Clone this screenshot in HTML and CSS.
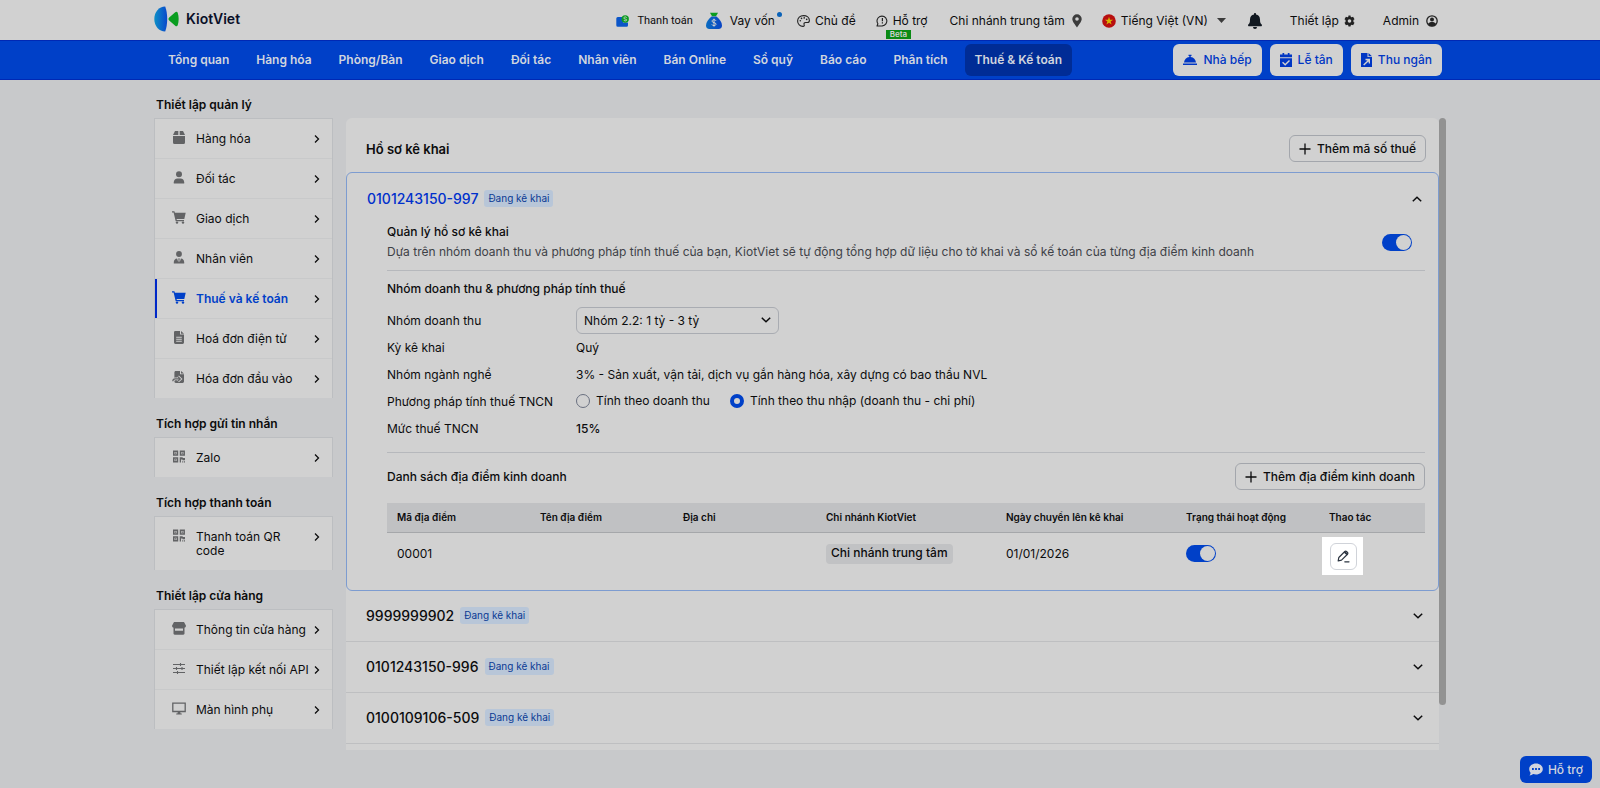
FILE: index.html
```html
<!DOCTYPE html>
<html lang="vi">
<head>
<meta charset="utf-8">
<meta name="viewport" content="width=device-width, initial-scale=1">
<title>KiotViet</title>
<link rel="stylesheet" href="styles.css">
</head>
<body>
<svg class="sprite" aria-hidden="true">
  <defs>
    <linearGradient id="logo-blue" x1="0" x2="1"><stop offset="0" stop-color="#0c8fc6"/><stop offset="1" stop-color="#0a48cc"/></linearGradient>
    <linearGradient id="bag-blue" x1="0" x2="1"><stop offset="0" stop-color="#0a6cc0"/><stop offset="1" stop-color="#0a44c4"/></linearGradient>
  </defs>
  <symbol id="chev" viewBox="0 0 6 10"><path d="M1 1.500 4.500 5 1 8.500" fill="none" stroke="currentColor" stroke-width="1.300"/></symbol>
  <symbol id="down" viewBox="0 0 10 6"><path d="M.8.8 5 4.800 9.200.8" fill="none" stroke="currentColor" stroke-width="1.500"/></symbol>
  <symbol id="plus" viewBox="0 0 12 12"><path d="M6 .5v11M.5 6h11" fill="none" stroke="currentColor" stroke-width="1.300"/></symbol>
  <symbol id="cart" viewBox="0 0 14 13"><path d="M0 .3h2.400l.5 1.500h10.800L12.300 8H4.600l.2 1h7.200v1.300H3.700L1.600 1.600H0z" fill="currentColor"/><circle cx="5" cy="11.600" r="1.200" fill="currentColor"/><circle cx="11" cy="11.600" r="1.200" fill="currentColor"/></symbol>
  <symbol id="qr" viewBox="0 0 12 12"><path fill="none" stroke="currentColor" stroke-width="1.500" d="M.75.75h3.700v3.700H.75zM7.500.75h3.700v3.700H7.500zM.75 7.500h3.700v3.700H.75z"/><path fill="currentColor" d="M1.900 1.900h1.400v1.400H1.900zM8.700 1.900h1.400v1.400H8.700zM1.900 8.700h1.400v1.400H1.900zM6.700 6.700h2.600l.8.900h1.900v2.200H9.500v-.9H8v3H6.700zM9.200 10.700h1v1.200h-1zM10.900 10.700h1.100v1.200h-1.100z"/></symbol>
</svg>

<header class="topbar">
  <div class="wrap topbar-in">
    <a class="logo" href="#">
      <svg width="26" height="26" viewBox="0 0 26 26"><path d="M11.200.5C5 .5.3 6 .3 13s4.700 12.500 10.900 12.500c1.400-3.800 2-8 2-12.500s-.6-8.700-2-12.500z" fill="url(#logo-blue)"/><path d="M15.200 11.500l6-5.300c1-.8 2-.7 2.500.5 1.300 3.600 1.300 8.900 0 12.500-.5 1.200-1.500 1.300-2.500.5l-6-5.300c-1-.9-1-2 0-2.900z" fill="#0a9d20"/></svg>
      <span>KiotViet</span>
    </a>
    <nav class="tools" aria-label="Tiện ích">
      <a class="tool small" href="#"><svg width="13" height="12" viewBox="0 0 13 12"><path d="M1.800 2H7v5.500h5v2.700A1.500 1.500 0 0 1 10.500 11.700H1.800A1.500 1.500 0 0 1 .3 10.200V3.500A1.500 1.500 0 0 1 1.800 2z" fill="#0a55c8"/><circle cx="9.200" cy="4" r="3.700" fill="#0a9d20"/><path d="M10.600 2.700a1.300 1.300 0 0 0-1.300-.8c-1 0-1.400.6-1.400 1.200 0 1.500 2.800.5 2.800 1.800 0 .7-.6 1-1.400 1s-1.300-.4-1.500-.9" fill="none" stroke="#d1d1d1" stroke-width=".9"/></svg>Thanh toán</a>
      <a class="tool g12" href="#"><svg width="18" height="18" viewBox="0 0 18 18"><path d="M5 .8h8l-2 3.400H7z" fill="#0a9d20"/><path d="M6.500 4.600h5c3 2.300 5.500 5.700 5.500 9 0 2.400-1.200 3.400-3.500 3.400h-9C2.200 17 1 16 1 13.600c0-3.300 2.500-6.700 5.500-9z" fill="url(#bag-blue)"/><path d="M11 8.800c-.4-.8-1-1.100-2-1.100-1.200 0-1.900.6-1.900 1.500 0 2 3.900.9 3.900 2.900 0 1-.8 1.500-2 1.500-1.100 0-1.800-.4-2.100-1.200M9 6.700v7.900" fill="none" stroke="#d1d1d1"/></svg><span class="dotted">Vay vốn</span></a>
      <a class="tool g22 tight" href="#"><svg width="13" height="12" viewBox="0 0 13 12"><path d="M6.500.6C3 .6.600 3 .6 6c0 3.200 2.500 5.400 5.300 5.400 1.500 0 1.600-1 1.200-1.900-.4-1.100.1-2 1.400-2h2c1.200 0 1.900-.8 1.900-2C12.400 2.600 9.800.6 6.500.6z" fill="none" stroke="#222" stroke-width="1.100"/><g fill="#222"><circle cx="3.300" cy="5.800" r=".8"/><circle cx="4.500" cy="3.400" r=".8"/><circle cx="7.200" cy="2.900" r=".8"/><circle cx="9.700" cy="4.400" r=".8"/></g></svg>Chủ đề</a>
      <a class="tool g20 tight beta" href="#"><svg width="12" height="12" viewBox="0 0 12 12"><path d="M1 11l.9-2.200A4.900 4.900 0 1 1 6.300 10.900z" fill="none" stroke="#222" stroke-width="1.100" stroke-linejoin="round"/><path d="M6.400 3v3.300M6.400 7.200v1.200" stroke="#222" stroke-width="1.200"/></svg>Hỗ trợ<b>Beta</b></a>
      <a class="tool g22" href="#">Chi nhánh trung tâm<svg width="10" height="14" viewBox="0 0 10 14"><path d="M5 .3A4.700 4.700 0 0 0 .3 5c0 2.500 3 6 4.700 8.500C6.700 11 9.700 7.500 9.700 5A4.700 4.700 0 0 0 5 .3zm0 6.500a1.800 1.800 0 1 1 0-3.600 1.800 1.800 0 0 1 0 3.600z" fill="#3c3c3c"/></svg></a>
      <a class="tool g20 tight" href="#"><svg width="14" height="14" viewBox="0 0 14 14"><circle cx="7" cy="7" r="6.800" fill="#b80f0f"/><path d="M7 2.800l1 3h3.100L8.600 7.600l1 3L7 8.800l-2.600 1.800 1-3-2.500-1.800H6z" fill="#d8b400"/></svg>Tiếng Việt (VN)<svg class="caret" width="9" height="5" viewBox="0 0 9 5"><path d="M0 0h9L4.500 5z" fill="#3c3c3c"/></svg></a>
      <a class="tool g22" href="#" aria-label="Thông báo"><svg width="14" height="16" viewBox="0 0 14 16"><path d="M7 0c.6 0 1 .4 1 1v.6c2.400.4 4 2.300 4 4.800 0 3 .5 3.900 1.700 5.100.6.700.2 1.700-.7 1.700H1c-.9 0-1.300-1-.7-1.700C1.500 10.300 2 9.400 2 6.400c0-2.500 1.600-4.400 4-4.800V1c0-.6.400-1 1-1zM5 14h4a2 2 0 0 1-4 0z" fill="#111820"/></svg></a>
      <a class="tool g28 tight" href="#">Thiết lập<svg width="11" height="12" viewBox="0 0 12 12"><path fill="#222" fill-rule="evenodd" d="M4.900 0h2.200l.3 1.500 1 .5 1.500-.6L11.500 4.100 10.300 5v2l1.200.9L9.900 10.600 8.400 10l-1 .5L7.100 12H4.900l-.3-1.500-1-.5-1.500.6L.5 7.900 1.700 7V5L.5 4.100 2.100 1.400l1.500.6 1-.5zM6 4a2 2 0 1 0 0 4 2 2 0 0 0 0-4z"/></svg></a>
      <a class="tool g28" href="#">Admin<svg width="12" height="12" viewBox="0 0 12 12"><circle cx="6" cy="6" r="5.200" fill="none" stroke="#222" stroke-width="1.300"/><circle cx="6" cy="4.600" r="2" fill="#222"/><path d="M2 9c.9-1.500 2.200-1.900 4-1.900s3.100.4 4 1.900c-1 1.600-2.300 2.200-4 2.200S3 10.600 2 9z" fill="#222"/></svg></a>
    </nav>
  </div>
</header>

<div class="navbar">
  <div class="wrap navbar-in">
    <nav class="menu" aria-label="Chính">
      <a href="#">Tổng quan</a><a href="#">Hàng hóa</a><a href="#">Phòng/Bàn</a><a href="#">Giao dịch</a><a href="#">Đối tác</a><a href="#">Nhân viên</a><a href="#">Bán Online</a><a href="#">Sổ quỹ</a><a href="#">Báo cáo</a><a href="#">Phân tích</a><a class="on" href="#">Thuế &amp; Kế toán</a>
    </nav>
    <div class="quick">
      <button type="button"><svg width="14" height="12" viewBox="0 0 14 12"><path d="M0 9.400h14v1.500H0zM1 8.600C1.300 5.500 3.400 3.400 6.300 3V2H5.500V.8h3V2h-.8v1c2.900.4 5 2.500 5.300 5.600z" fill="currentColor"/></svg>Nhà bếp</button>
      <button type="button"><svg width="12" height="14" viewBox="0 0 12 14"><path fill="currentColor" fill-rule="evenodd" d="M2.500 0h1.700v1.600h3.600V0h1.700v1.600H12v2.600H0V1.600h2.500zM0 5.200h12V14H0zm3 3.600L2.100 9.800 5.200 12.800 10 8 9 7 5.200 10.800z"/></svg>Lễ tân</button>
      <button type="button"><svg width="11" height="14" viewBox="0 0 11 14"><path fill="currentColor" fill-rule="evenodd" d="M0 0h6.500v4H11v10H0zM7.500 0L11 3.200H7.500zM4.500 5.800v1.500l2 .2L2.200 11.600l1 1L7.500 8.400l.3 2.200H9V5.800z"/></svg>Thu ngân</button>
    </div>
  </div>
</div>

<div class="wrap page">
  <aside class="side">
    <h2>Thiết lập quản lý</h2>
    <ul>
      <li><a href="#"><svg class="ic" viewBox="0 0 14 13"><path d="M3 0h3.300v4H1zM7.700 0H11l2 4H7.700zM1 5h12v6.500a1.500 1.500 0 0 1-1.500 1.500h-9A1.500 1.500 0 0 1 1 11.500z" fill="currentColor"/></svg><span>Hàng hóa</span><svg class="go"><use href="#chev"/></svg></a></li>
      <li><a href="#"><svg class="ic" viewBox="0 0 14 13"><circle cx="7" cy="3.200" r="3" fill="currentColor"/><path d="M1.800 12.500v-1.300C1.800 8.800 3.400 7.400 5.500 7.400h3c2.100 0 3.700 1.400 3.700 3.800v1.300z" fill="currentColor"/></svg><span>Đối tác</span><svg class="go"><use href="#chev"/></svg></a></li>
      <li><a href="#"><svg class="ic"><use href="#cart"/></svg><span>Giao dịch</span><svg class="go"><use href="#chev"/></svg></a></li>
      <li><a href="#"><svg class="ic" viewBox="0 0 14 13"><circle cx="7" cy="3" r="2.900" fill="currentColor"/><path d="M1.800 12.500v-1.300c0-2.200 1.300-3.600 3.300-3.800l1.200 3.900.3-2.400-.5-1.300h1.800l-.5 1.300.3 2.400 1.200-3.900c2 .2 3.300 1.600 3.300 3.800v1.300z" fill="currentColor"/></svg><span>Nhân viên</span><svg class="go"><use href="#chev"/></svg></a></li>
      <li class="on"><a href="#"><svg class="ic"><use href="#cart"/></svg><span>Thuế và kế toán</span><svg class="go"><use href="#chev"/></svg></a></li>
      <li><a href="#"><svg class="ic" viewBox="0 0 14 13"><path fill="currentColor" fill-rule="evenodd" d="M3.200 0H8v3.600h4v8a1.400 1.400 0 0 1-1.400 1.400H3.400A1.400 1.400 0 0 1 2 11.600V1.400C2 .6 2.500 0 3.200 0zM9 0l3 2.700H9zM4.200 5.800v.9h5.600v-.9zm0 2v.9h5.600v-.9zm0 2v.9h5.600v-.9z"/></svg><span>Hoá đơn điện tử</span><svg class="go"><use href="#chev"/></svg></a></li>
      <li><a href="#"><svg class="ic" viewBox="0 0 14 13"><path fill="currentColor" d="M3.800 0H8v3.300h4v7.300a1.400 1.400 0 0 1-1.400 1.400H3.800a1.400 1.400 0 0 1-1.400-1.400V1.400C2.400.6 3 0 3.800 0zM9 0l3 2.500H9z"/><path d="M.8 10.300c0-1.700 1-2.400 2.500-2.400h4M6 5.500l2.600 2.400L6 10.300" fill="none" stroke="#d1d1d1" stroke-width="2.600"/><path d="M.8 10.300c0-1.700 1-2.400 2.500-2.400h4.600M6 5.700l2.300 2.200L6 10.100" fill="none" stroke="currentColor" stroke-width="1.200"/></svg><span>Hóa đơn đầu vào</span><svg class="go"><use href="#chev"/></svg></a></li>
    </ul>
    <h2>Tích hợp gửi tin nhắn</h2>
    <ul>
      <li><a href="#"><svg class="ic qr"><use href="#qr"/></svg><span>Zalo</span><svg class="go"><use href="#chev"/></svg></a></li>
    </ul>
    <h2>Tích hợp thanh toán</h2>
    <ul>
      <li><a href="#"><svg class="ic qr"><use href="#qr"/></svg><span>Thanh toán QR code</span><svg class="go"><use href="#chev"/></svg></a></li>
    </ul>
    <h2>Thiết lập cửa hàng</h2>
    <ul>
      <li><a href="#"><svg class="ic" viewBox="0 0 14 13"><path fill="currentColor" fill-rule="evenodd" d="M2 0h10l2 3.800C14 5 13 5.800 12.500 5.800v5.700c0 .7-.5 1.200-1.200 1.200H2.700c-.7 0-1.200-.5-1.200-1.200V5.800C1 5.800 0 5 0 3.800zM3 6.500v2.300h8V6.500z"/></svg><span>Thông tin cửa hàng</span><svg class="go"><use href="#chev"/></svg></a></li>
      <li><a href="#"><svg class="ic" viewBox="0 0 14 13"><path d="M1 2.500h12M1 6.500h12M1 10.500h12M8.500 1v3M4.500 5v3M10 5v3M5.500 9v3" stroke="currentColor" stroke-width="1.100"/></svg><span>Thiết lập kết nối API</span><svg class="go"><use href="#chev"/></svg></a></li>
      <li><a href="#"><svg class="ic" viewBox="0 0 14 13"><path fill="none" stroke="currentColor" stroke-width="1.300" d="M.8 1.200h12.400v8.300H.8z"/><path fill="currentColor" d="M5.800 10h2.400l.4 1.400h1.200v1H4.200v-1h1.200z"/></svg><span>Màn hình phụ</span><svg class="go"><use href="#chev"/></svg></a></li>
    </ul>
  </aside>

  <main class="panel">
    <div class="panel-body">
      <div class="panel-head">
        <h1>Hồ sơ kê khai</h1>
        <button type="button" class="btn"><svg width="12" height="12"><use href="#plus"/></svg>Thêm mã số thuế</button>
      </div>

      <section class="open">
        <header class="row-head">
          <h2>0101243150-997</h2><span class="tag">Đang kê khai</span>
          <button type="button" class="toggle up" aria-label="Thu gọn"><svg width="10" height="6"><use href="#down"/></svg></button>
        </header>
        <div class="detail">
          <div class="manage">
            <div>
              <h3><label for="manage">Quản lý hồ sơ kê khai</label></h3>
              <p>Dựa trên nhóm doanh thu và phương pháp tính thuế của bạn, KiotViet sẽ tự động tổng hợp dữ liệu cho tờ khai và sổ kế toán của từng địa điểm kinh doanh</p>
            </div>
            <input id="manage" class="switch" type="checkbox" checked>
          </div>
          <div class="method">
            <h3>Nhóm doanh thu &amp; phương pháp tính thuế</h3>
            <div class="fields">
              <label for="group">Nhóm doanh thu</label>
              <div class="select"><select id="group"><option>Nhóm 2.2: 1 tỷ - 3 tỷ</option></select><svg width="10" height="6"><use href="#down"/></svg></div>
              <span>Kỳ kê khai</span><span>Quý</span>
              <span>Nhóm ngành nghề</span><span>3% - Sản xuất, vận tải, dịch vụ gắn hàng hóa, xây dựng có bao thầu NVL</span>
              <span>Phương pháp tính thuế TNCN</span>
              <div class="radios">
                <label><input type="radio" name="method">Tính theo doanh thu</label>
                <label><input type="radio" name="method" checked>Tính theo thu nhập (doanh thu - chi phí)</label>
              </div>
              <span>Mức thuế TNCN</span><span class="strong">15%</span>
            </div>
          </div>
          <div class="places-head">
            <h3>Danh sách địa điểm kinh doanh</h3>
            <button type="button" class="btn"><svg width="12" height="12"><use href="#plus"/></svg>Thêm địa điểm kinh doanh</button>
          </div>
          <table>
            <colgroup><col class="c-std"><col class="c-std"><col class="c-std"><col class="c-wide"><col class="c-wide"><col class="c-std"><col></colgroup>
            <thead><tr><th>Mã địa điểm</th><th>Tên địa điểm</th><th>Địa chỉ</th><th>Chi nhánh KiotViet</th><th>Ngày chuyển lên kê khai</th><th>Trạng thái hoạt động</th><th>Thao tác</th></tr></thead>
            <tbody><tr><td>00001</td><td></td><td></td><td><span class="chip">Chi nhánh trung tâm</span></td><td>01/01/2026</td><td><input class="switch" type="checkbox" checked aria-label="Trạng thái hoạt động"></td>
            <td class="act"><span class="spot"><button type="button" aria-label="Sửa"><svg width="13" height="13" viewBox="0 0 13 13"><path d="M1.200 10.800l.6-3.300 6-6a1.200 1.200 0 0 1 1.700 0l1 1a1.200 1.200 0 0 1 0 1.700l-6 6zM7.800 11.800h4.200" fill="none" stroke="#2b3440" stroke-width="1.200" stroke-linejoin="round" stroke-linecap="round"/><path d="M6.800 2.500l1.400-1.300 2.600 2.500-1.400 1.400z" fill="#2b3440"/></svg></button></span></td></tr></tbody>
          </table>
        </div>
      </section>

      <section class="row-head closed"><h2>9999999902</h2><span class="tag">Đang kê khai</span><button type="button" class="toggle" aria-label="Mở rộng"><svg width="10" height="6"><use href="#down"/></svg></button></section>
      <section class="row-head closed"><h2>0101243150-996</h2><span class="tag">Đang kê khai</span><button type="button" class="toggle" aria-label="Mở rộng"><svg width="10" height="6"><use href="#down"/></svg></button></section>
      <section class="row-head closed"><h2>0100109106-509</h2><span class="tag">Đang kê khai</span><button type="button" class="toggle" aria-label="Mở rộng"><svg width="10" height="6"><use href="#down"/></svg></button></section>
    </div>
    <div class="track"><div class="thumb"></div></div>
  </main>
</div>

<button type="button" class="help"><svg width="14" height="13" viewBox="0 0 14 13"><path fill="currentColor" fill-rule="evenodd" d="M7 .5c3.800 0 6.800 2.400 6.800 5.500S10.800 11.500 7 11.500c-1 0-2-.2-2.900-.5-.9.800-2.200 1.300-3.600 1.400.7-.8 1-1.700 1.100-2.700C.7 8.700.2 7.400.2 6 .2 2.900 3.200.5 7 .5zM3 5v2h1.800V5zm3.100 0v2h1.800V5zm3.100 0v2H11V5z"/></svg>Hỗ trợ</button>
</body>
</html>
```
FILE: styles.css
```css
* { box-sizing: border-box; }
body { margin: 0; min-height: 100vh; background: #c8c9cb; color: #0c0c0d; font: 12px/16px Inter, "Liberation Sans", sans-serif; }
a { color: inherit; text-decoration: none; }
button, select { font: inherit; color: inherit; cursor: pointer; }
h1, h2, h3, p, ul { margin: 0; padding: 0; }
svg { flex: none; display: block; }
.sprite { position: absolute; width: 0; height: 0; }
.wrap { max-width: 1292px; margin: 0 auto; }

.topbar { background: #d1d1d1; }
.topbar-in { display: flex; align-items: center; justify-content: space-between; height: 40px; padding-right: 8px; }
.logo { display: flex; align-items: center; gap: 6px; padding-bottom: 3px; font-size: 14px; font-weight: 600; color: #0a0f28; }
.tools { display: flex; align-items: center; height: 40px; padding-top: 1px; }
.tool { display: flex; align-items: center; gap: 7px; white-space: nowrap; }
.tight { gap: 5px; }
.small { font: 11px/16px Roboto, sans-serif; gap: 9px; }
.g12 { margin-left: 12px; }
.g20 { margin-left: 20px; }
.g22 { margin-left: 22px; }
.g28 { margin-left: 28px; }
.caret { margin-left: 4px; }
.dotted, .beta { position: relative; }
.dotted::after { content: ""; position: absolute; right: -7px; top: -1px; width: 5px; height: 5px; border-radius: 50%; background: #0a62b8; }
.beta b { position: absolute; left: 10px; top: 17px; padding: 0 4px; background: #0a8a14; color: #d1d1d1; font-size: 8px; line-height: 9px; font-weight: 600; }

.navbar { background: #0040c8; border: solid #0028b4; border-width: 1px 0; }
.navbar-in { display: flex; align-items: center; justify-content: space-between; height: 38px; padding: 0 4px; }
.menu { display: flex; gap: 7px; color: #d1d5de; font-weight: 600; }
.menu a { padding: 8px 10px; border-radius: 6px; white-space: nowrap; }
.menu .on { background: #002c96; }
.quick { display: flex; gap: 8px; }
.quick button { display: flex; align-items: center; gap: 6px; height: 32px; padding: 0 10px; border: 0; border-radius: 6px; background: #d1d1d1; color: #0036c4; font-weight: 500; white-space: nowrap; }

.page { display: flex; gap: 13px; padding-top: 17px; }
.side { width: 179px; flex: none; }
.side h2 { padding: 0 2px; font-size: 12px; line-height: 16px; font-weight: 600; margin: 18px 0 5px; }
.side h2:first-child { margin-top: 0; }
.side ul { list-style: none; background: #d1d1d1; border: solid #bcbec1; border-width: 1px 1px 0; }
.side li + li { border-top: 1px solid #c8c9ca; }
.side li a { display: flex; gap: 10px; padding: 13px 12px 12px 17px; line-height: 14px; }
.side li span { flex: 1; margin-right: -6px; }
.ic { width: 14px; height: 13px; margin-top: -1px; color: #626365; }
.qr { padding: 0 1px; }
.go { width: 6px; height: 10px; margin-top: 2px; }
.side .on a { border-left: 2px solid #0028c8; padding-left: 15px; color: #0040c8; font-weight: 600; }
.side .on .ic { color: #0040c8; }
.side .on .go { color: #0c0c0d; }

.panel { flex: 1; min-width: 0; margin-top: 21px; display: flex; align-items: stretch; }
.panel-body { flex: 1; min-width: 0; background: #d1d1d1; border-radius: 6px 6px 0 0; padding-bottom: 6px; }
.panel-head { display: flex; align-items: center; justify-content: space-between; padding: 17px 13px 10px 20px; }
h1 { font-size: 13px; line-height: 16px; font-weight: 600; }
.btn { display: flex; align-items: center; gap: 6px; height: 27px; padding: 0 9px; border: 1px solid #a3a6ac; border-radius: 6px; background: none; font-weight: 500; white-space: nowrap; }
.open { border: 1px solid #7d9cd0; border-radius: 6px; padding-bottom: 15px; }
.row-head { display: flex; align-items: center; gap: 6px; height: 50px; padding: 0 16px 0 20px; }
.row-head h2 { font-size: 14px; line-height: 18px; font-weight: 500; }
.open .row-head { height: 51px; }
.open h2 { color: #0030cc; }
.closed { box-sizing: content-box; border-bottom: 1px solid #bebfc1; }
.tag { padding: 0 4px; border-radius: 3px; background: #b8c6d8; color: #0a3a94; font-size: 10px; line-height: 17px; }
.toggle { margin-left: auto; padding: 4px 0; border: 0; background: none; }
.up svg { transform: rotate(180deg); }
.detail { padding: 0 13px 0 40px; }
h3 { font-size: 12px; line-height: 16px; font-weight: 500; }
.manage { display: flex; align-items: center; justify-content: space-between; padding-bottom: 10px; border-bottom: 1px solid #b6b8bc; }
.manage p { margin-top: 4px; color: #3e4147; }
.switch { appearance: none; flex: none; display: block; width: 30px; height: 17px; margin: 0; padding: 1px; border-radius: 9px; background: #0040c8; cursor: pointer; }
.switch::before { content: ""; display: block; width: 15px; height: 15px; margin-left: auto; border-radius: 50%; background: #d1d1d1; }
.manage .switch { margin: 1px 13px 0 0; }
.method { padding: 10px 0; border-bottom: 1px solid #b6b8bc; }
.fields { display: grid; grid-template-columns: 189px 1fr; grid-auto-rows: 27px; margin-top: 10px; align-items: center; }
.select { position: relative; width: 203px; }
.select select { appearance: none; display: block; width: 100%; height: 27px; padding: 0 7px; border: 1px solid #a9acb2; border-radius: 6px; background: none; }
.select svg { position: absolute; right: 8px; top: 10px; pointer-events: none; }
.radios { display: flex; gap: 20px; padding-bottom: 2px; }
.radios label { display: flex; align-items: center; gap: 6px; }
.radios input { appearance: none; width: 14px; height: 14px; margin: 0; border: 1px solid #6a7080; border-radius: 50%; }
.radios input:checked { border: 4px solid #0040c8; }
.strong { font-weight: 500; }
.places-head { display: flex; align-items: center; justify-content: space-between; padding: 10px 0 13px; }
table { width: 100%; border-collapse: collapse; table-layout: fixed; }
.c-std { width: 143px; }
.c-wide { width: 180px; }
th, td { padding: 0 10px; text-align: left; white-space: nowrap; }
th { height: 29px; background: #c0c1c3; border-bottom: 1px solid #a5a7aa; font-size: 10px; font-weight: 600; }
td { height: 40px; }
.chip { display: inline-block; padding: 1px 5px 3px; border-radius: 4px; background: #c1c2c4; font-weight: 500; }
.act { padding: 4px 0 0 3px; }
.spot { display: flex; width: fit-content; padding: 6px 6px 5px 8px; background: #fff; }
.spot button { display: grid; place-items: center; width: 27px; height: 27px; padding: 0; border: 1px solid #d0d3d9; border-radius: 6px; background: #fff; }
.track { width: 7px; }
.thumb { height: 93%; border-radius: 4px; background: #929292; }
.help { position: fixed; right: 8px; bottom: 5px; display: flex; align-items: center; gap: 5px; height: 27px; padding: 0 9px; border: 0; border-radius: 6px; background: #0040c8; color: #d1d5de; font-weight: 500; }
```
